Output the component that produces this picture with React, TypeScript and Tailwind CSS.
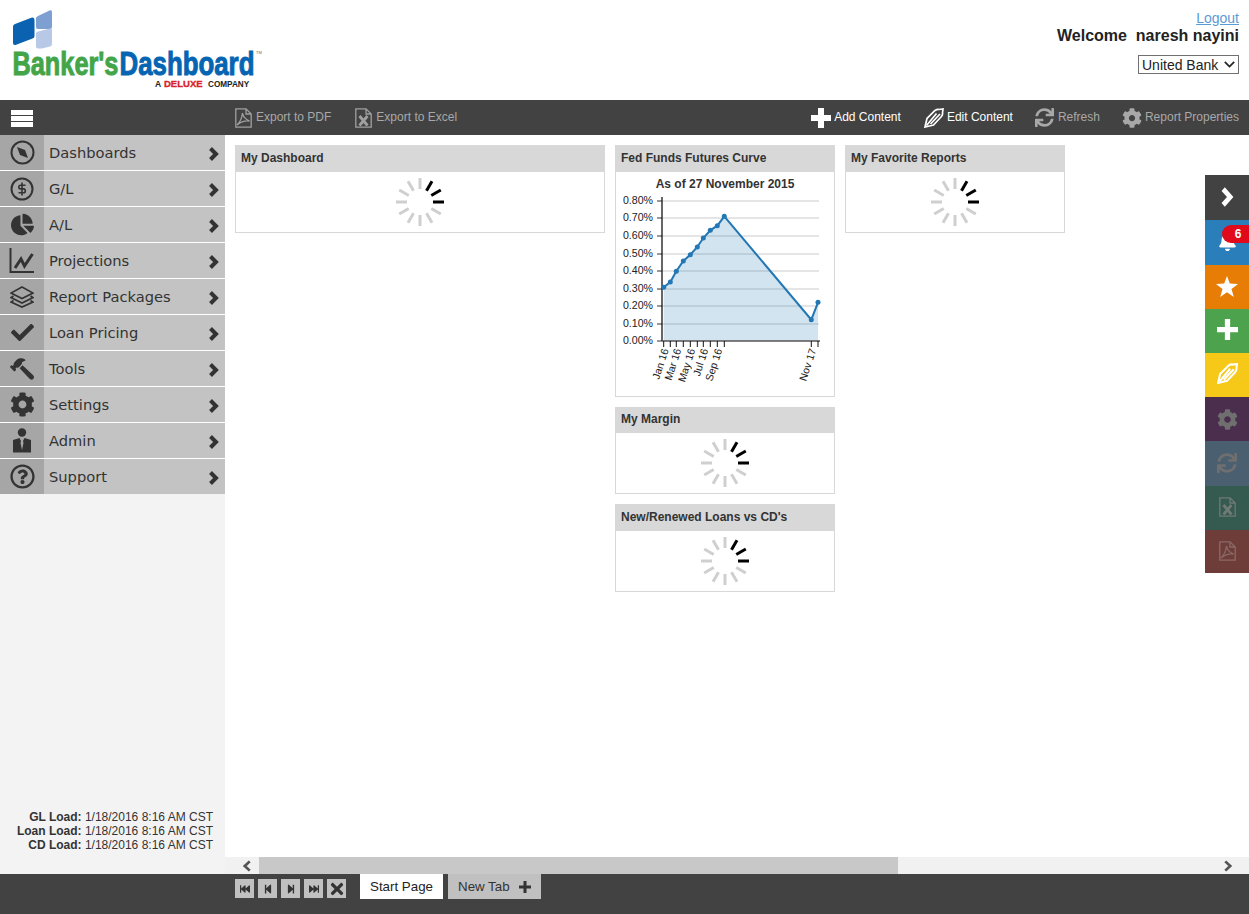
import React from "react";
import { FaChartPie, FaCheck, FaHammer, FaCog, FaRegQuestionCircle, FaSync, FaBell, FaTimes, FaStepBackward, FaStepForward, FaFastBackward, FaFastForward } from "react-icons/fa";

const Chevron = ({ w = 11, h = 14, color = "#333", dir = "right", sw = 4 }: { w?: number; h?: number; color?: string; dir?: string; sw?: number }) => (
  <svg width={w} height={h} viewBox="0 0 11 14" preserveAspectRatio="none" className={dir === "left" ? "-scale-x-100" : ""}>
    <path d="M2.5 1.5 L8 7 L2.5 12.5" fill="none" stroke={color} strokeWidth={sw} />
  </svg>
);
const Compass = () => (
  <svg width="25" height="25" viewBox="0 0 25 25">
    <circle cx="12.5" cy="12.5" r="11" fill="none" stroke="#333" strokeWidth="2" />
    <path d="M7 7 L15 10 L18 18 L10 15 Z" fill="#333" />
  </svg>
);
const Dollar = () => (
  <svg width="24" height="24" viewBox="0 0 24 24">
    <circle cx="12" cy="12" r="10.5" fill="none" stroke="#333" strokeWidth="2" />
    <path d="M15.5 8.2 H10.5 Q8.8 8.2 8.8 10 Q8.8 11.9 10.5 11.9 H13.5 Q15.3 11.9 15.3 13.9 Q15.3 15.8 13.5 15.8 H8.5 M12 5.5 V18.5" fill="none" stroke="#333" strokeWidth="1.6" />
  </svg>
);
const ChartIcon = () => (
  <svg width="26" height="26" viewBox="0 0 26 26">
    <path d="M1.5 0 V24 H25" fill="none" stroke="#333" strokeWidth="2" />
    <path d="M6 20 L12 11 L15.5 18 L23.5 6" fill="none" stroke="#333" strokeWidth="3" />
  </svg>
);
const LayersIcon = () => (
  <svg width="24" height="22" viewBox="0 0 24 22" fill="none" stroke="#333" strokeWidth="1.6">
    <path d="M12 1 L23 7 L12 12.5 L1 7 Z" />
    <path d="M3.5 10 L1 11.5 L12 17 L23 11.5 L20.5 10" />
    <path d="M3.5 14.5 L1 16 L12 21 L23 16 L20.5 14.5" />
  </svg>
);
const AdminIcon = () => (
  <svg width="20" height="25" viewBox="0 0 20 25" fill="#333">
    <circle cx="10" cy="4.5" r="4.2" />
    <path d="M1 12 L7.5 10 L9 13 L8.5 15 L10 22 L11.5 15 L11 13 L12.5 10 L19 12 V24.5 H1 Z" />
  </svg>
);
const Pen = ({ size = 20, color = "#fff", sw = 1.7 }: { size?: number; color?: string; sw?: number }) => (
  <svg width={size} height={size} viewBox="0 0 20 20" fill="none" stroke={color} strokeWidth={sw}>
    <path d="M1 19 L3 10.5 L11 2.5 Q13.5 0.8 15 1.5 L19 1 L18.5 5 Q19 7 17 9 L9.5 17 Z" />
    <path d="M2.5 17.5 L12.5 5.5 M6.5 16 L16 6" />
  </svg>
);
const Pdf = ({ color = "#a0a0a0", size = 20 }: { color?: string; size?: number }) => (
  <svg width={size * 0.85} height={size} viewBox="0 0 17 20" fill="none" stroke={color} strokeWidth="1.3">
    <path d="M0.8 0.8 H11 L16.2 6 V19.2 H0.8 Z M11 0.8 V6 H16.2" />
    <path d="M2 17 Q6.5 13 7.5 5 Q8 10 14.5 13 Q8 12 2 17 Z" />
  </svg>
);
const Xls = ({ color = "#a0a0a0", size = 20 }: { color?: string; size?: number }) => (
  <svg width={size * 0.85} height={size} viewBox="0 0 17 20" fill="none" stroke={color} strokeWidth="1.3">
    <path d="M0.8 0.8 H11 L16.2 6 V19.2 H0.8 Z M11 0.8 V6 H16.2" />
    <path d="M4.5 8 L12.5 17.5 M12.5 8 L4.5 17.5" strokeWidth="2.8" />
  </svg>
);
const BigPlus = ({ size = 20, t = 6 }: { size?: number; t?: number }) => {
  const a = (20 - t) / 2;
  const b = a + t;
  return (
    <svg width={size} height={size} viewBox="0 0 20 20" fill="currentColor" className="text-white">
      <path d={`M${a} 0 H${b} V${a} H20 V${b} H${b} V20 H${a} V${b} H0 V${a} H${a} Z`} />
    </svg>
  );
};
const Star = () => (
  <svg width="22" height="21" viewBox="0 0 22 21" fill="#fff">
    <path d="M11 0 L13.8 7.6 L22 7.9 L15.5 12.9 L17.8 21 L11 16.3 L4.2 21 L6.5 12.9 L0 7.9 L8.2 7.6 Z" />
  </svg>
);

const Spinner = () => {
  const ticks = [0, 30, 60, 90, 120, 150, 180, 210, 240, 270, 300, 330];
  return (
    <svg width="50" height="50" viewBox="-25 -25 50 50">
      {ticks.map((a) => (
        <line key={a} x1="0" y1="-13" x2="0" y2="-24" strokeWidth="3" stroke={a === 30 || a === 60 || a === 90 ? "#000" : "#cfcfcf"} transform={`rotate(${a})`} />
      ))}
    </svg>
  );
};

const Card = ({ title, children, bodyClass, headClass }: { title: string; children?: React.ReactNode; bodyClass?: string; headClass?: string }) => (
  <div className="border border-[#d8d8d8] bg-white">
    <div className={`bg-[#d8d8d8] pl-[5px] text-[12px] leading-[15px] font-bold text-[#333] ${headClass ?? "h-[26px] pt-[5px]"}`}>{title}</div>
    <div className={bodyClass ?? "flex h-[60px] items-center justify-center"}>{children ?? <Spinner />}</div>
  </div>
);

const Logo = () => (
  <svg width="270" height="100" viewBox="0 0 270 100" className="block font-['Liberation_Sans']">
    <path d="M15 24 L32 17.5 Q34.5 17 34.5 20 V36 Q34.5 38 32.5 38.5 L15.5 45 Q13 45.5 13 43 V26.5 Q13 24.8 15 24 Z" fill="#0a62b0" />
    <path d="M38 16 L50 10.3 Q52 9.8 52 12 V27 Q52 29 50 29 H38 Q36 29 36 27 V18 Q36 17 38 16 Z" fill="#7d9fd1" />
    <path d="M38 31.5 L50 28.5 Q52 28.3 52 30 V44 Q52 46 50 46.5 L42 48.5 H38 Q36 48.5 36 46 V33 Q36 32 38 31.5 Z" fill="#b7c9e6" />
    <g transform="translate(12.5 74.5) scale(0.745 1)">
      <text fontWeight="700" fontSize="34" fill="#43a548" stroke="#43a548" strokeWidth="1">Banker's</text>
    </g>
    <g transform="translate(119.5 74.5) scale(0.76 1)">
      <text fontWeight="700" fontSize="34" fill="#0565b3" stroke="#0565b3" strokeWidth="1">Dashboard</text>
    </g>
    <text x="155" y="86.5" fontWeight="700" fontSize="8.5" fill="#222">A</text>
    <g transform="translate(164 86.5) scale(1.12 1)">
      <text fontWeight="700" fontSize="8.5" fill="#d8232a" stroke="#d8232a" strokeWidth="0.3">DELUXE</text>
    </g>
    <text x="208" y="86.5" fontWeight="700" fontSize="8.2" fill="#222">COMPANY</text>
    <text x="256" y="54" fontSize="4" fill="#666">TM</text>
  </svg>
);

const menu: [string, React.ReactNode][] = [
  ["Dashboards", <Compass />],
  ["G/L", <Dollar />],
  ["A/L", <FaChartPie size={23} />],
  ["Projections", <ChartIcon />],
  ["Report Packages", <LayersIcon />],
  ["Loan Pricing", <FaCheck size={23} />],
  ["Tools", <FaHammer size={24} className="-scale-x-100" />],
  ["Settings", <FaCog size={25} />],
  ["Admin", <AdminIcon />],
  ["Support", <FaRegQuestionCircle size={25} />],
];

const ToolItem = ({ icon, label, active, iconW = "w-[20px]", gap = "gap-[3px]", extra = "" }: { icon: React.ReactNode; label: string; active?: boolean; iconW?: string; gap?: string; extra?: string }) => (
  <div className={`flex items-center text-[12px] ${gap} ${extra} ${active ? "text-white" : "text-[#a8a8a8]"}`}>
    <span className={`flex items-center justify-center ${iconW}`}>{icon}</span>
    <span className="mb-[2px]">{label}</span>
  </div>
);

const pts: [number, number][] = [[663.7,287.3],[670.3,282],[676.3,271.3],[683.3,261],[690.3,254.7],[697.3,247],[703.3,238],[710.3,230.3],[717.3,225.7],[724.3,216.3],[811.3,319.7],[818,302.3]];
const labels: [string, number][] = [["0.80%",201],["0.70%",218],["0.60%",236],["0.50%",254],["0.40%",271],["0.30%",289],["0.20%",306],["0.10%",324],["0.00%",341]];
const xLabels: [string, number][] = [["Jan 16",663.7],["Mar 16",676.3],["May 16",690.3],["Jul 16",703.3],["Sep 16",717.3],["Nov 17",811.3]];

const Chart = () => (
  <svg width="218" height="224" viewBox="616 172 218 224" className="block font-['Liberation_Sans']">
    <text x="725" y="188" textAnchor="middle" fontSize="12" fontWeight="700" fill="#333">As of 27 November 2015</text>
    {labels.map(([t, y]) => (
      <g key={t}>
        <line x1="657" x2="662" y1={y} y2={y} stroke="#333" />
        {t !== "0.00%" && <line x1="662" x2="819" y1={y} y2={y} stroke="#ddd" strokeWidth="1.5" />}
        <text x="653" y={y + 3} textAnchor="end" fontSize="10.6" fill="#222">{t}</text>
      </g>
    ))}
    <path d={`M${pts[0][0]} 341 ${pts.map((p) => `L${p[0]} ${p[1]}`).join(" ")} L818 341 Z`} fill="#1f77b4" fillOpacity="0.2" />
    <line x1="662" x2="662" y1="197" y2="341" stroke="#000" strokeWidth="1.2" />
    <line x1="662" x2="820" y1="341" y2="341" stroke="#555" strokeWidth="1.5" />
    {pts.map((p) => (
      <line key={p[0]} x1={p[0]} x2={p[0]} y1="341" y2="347" stroke="#111" />
    ))}
    <polyline points={pts.map((p) => p.join(",")).join(" ")} fill="none" stroke="#2277b4" strokeWidth="2" />
    {pts.map((p) => (
      <circle key={p[0]} cx={p[0]} cy={p[1]} r="2.5" fill="#2277b4" />
    ))}
    {xLabels.map(([t, x]) => (
      <text key={t} x={x + 5} y="350" textAnchor="end" fontSize="10.5" fill="#222" transform={`rotate(-72 ${x + 5} 350)`}>{t}</text>
    ))}
  </svg>
);

const rail: [string, React.ReactNode, string, string][] = [
  ["bg-[#424242]", <Chevron w={14} h={20} color="#fff" sw={3.6} />, "h-[45px]", "mb-[2px]"],
  ["bg-[#2a7fba]", <FaBell size={19} color="#fff" />, "h-[45px]", "mb-[2px]"],
  ["bg-[#e87d05]", <Star />, "h-[44px]", "mb-[2px]"],
  ["bg-[#4da34d]", <BigPlus size={21} t={5} />, "h-[44px]", "mb-[3px]"],
  ["bg-[#f6c817]", <Pen size={21} sw={2} />, "h-[44px]", "mb-[4px]"],
  ["bg-[#4b2d4d]", <FaCog size={21} color="#6f6f6f" />, "h-[44px]", "mb-0"],
  ["bg-[#4a5f70]", <FaSync size={20} color="#6f6f6f" />, "h-[45px]", "mb-[2px]"],
  ["bg-[#355a50]", <Xls color="#6f7a75" />, "h-[44px]", "mb-[2px]"],
  ["bg-[#6e3d39]", <Pdf color="#8a6a66" />, "h-[43px]", "mb-[2px]"],
];

const NavBtn = ({ children }: { children: React.ReactNode }) => (
  <div className="flex h-[19px] w-[19px] items-center justify-center bg-[#c0c0c0] text-[#333]">{children}</div>
);

export default function App() {
  return (
    <div className="relative flex h-[914px] w-[1249px] flex-col overflow-hidden bg-white font-['Liberation_Sans',Arial,sans-serif]">
      <header className="flex h-[100px] shrink-0 justify-between">
        <Logo />
        <div className="flex flex-col items-end pr-[10px] pt-[10px] text-[#222]">
          <a className="text-[14px] leading-[16px] text-[#5b9bd5] underline">Logout</a>
          <div className="mt-[1px] text-[16px] leading-[18px] font-bold whitespace-pre">Welcome  naresh nayini</div>
          <div className="relative mt-[10px]">
            <select className="block h-[19px] w-[101px] appearance-none rounded-none border border-[#707070] bg-white pl-[3px] text-[14px] leading-[16px] text-[#222]">
              <option>United Bank</option>
            </select>
            <svg width="11" height="7" viewBox="0 0 11 7" className="pointer-events-none absolute right-[4px] top-[6px]">
              <path d="M0.8 0.8 L5.5 5.5 L10.2 0.8" fill="none" stroke="#222" strokeWidth="1.7" />
            </svg>
          </div>
        </div>
      </header>

      <div className="flex h-[35px] shrink-0 items-center bg-[#424242]">
        <div className="flex w-[235px] shrink-0 pl-[11px]">
          <div className="mt-[2px] flex w-[22px] flex-col gap-[1px]">
            <div className="h-[5px] bg-white" />
            <div className="h-[5px] bg-white" />
            <div className="h-[5px] bg-white" />
          </div>
        </div>
        <div className="flex flex-1 items-center justify-between pr-[10px]">
          <div className="flex gap-[24px]">
            <ToolItem icon={<Pdf />} label="Export to PDF" iconW="w-[17px]" gap="gap-[4px]" />
            <ToolItem icon={<Xls />} label="Export to Excel" iconW="w-[17px]" gap="gap-[4px]" />
          </div>
          <div className="flex">
            <ToolItem icon={<BigPlus />} label="Add Content" active />
            <ToolItem icon={<Pen />} label="Edit Content" active extra="ml-[23px]" />
            <ToolItem icon={<FaSync size={19} color="#a8a8a8" />} label="Refresh" extra="ml-[22px]" />
            <ToolItem icon={<FaCog size={20} color="#a8a8a8" />} label="Report Properties" extra="ml-[22px]" />
          </div>
        </div>
      </div>

      <div className="flex min-h-0 flex-1">
        <aside className="flex w-[225px] shrink-0 flex-col justify-between bg-[#f3f3f3] pb-[22px]">
          <nav className="flex flex-col gap-px bg-white">
            {menu.map(([label, icon]) => (
              <div key={label} className="flex h-[35px] text-[#333]">
                <div className="flex w-[44px] items-center justify-center bg-[#a6a6a6]">{icon}</div>
                <div className="flex flex-1 items-center justify-between bg-[#c3c3c3] pl-[5px] pr-[6px] font-['DejaVu_Sans'] text-[14.67px]">
                  <span>{label}</span>
                  <span className="mt-[3px] flex"><Chevron /></span>
                </div>
              </div>
            ))}
          </nav>
          <div className="pr-[12px] text-right text-[12px] leading-[14px] text-[#333]">
            <div><b>GL Load:</b> 1/18/2016 8:16 AM CST</div>
            <div><b>Loan Load:</b> 1/18/2016 8:16 AM CST</div>
            <div><b>CD Load:</b> 1/18/2016 8:16 AM CST</div>
          </div>
        </aside>

        <main className="flex min-w-0 flex-1 flex-col">
          <div className="flex flex-1 gap-[10px] pl-[10px] pt-[10px]">
            <div className="w-[370px]">
              <Card title="My Dashboard" />
            </div>
            <div className="flex w-[220px] flex-col gap-[10px]">
              <Card title="Fed Funds Futures Curve" bodyClass="h-[224px]">
                <Chart />
              </Card>
              <Card title="My Margin" headClass="h-[25px] pt-[4px]" />
              <Card title="New/Renewed Loans vs CD's" />
            </div>
            <div className="w-[220px]">
              <Card title="My Favorite Reports" />
            </div>
          </div>
          <div className="flex h-[17px] shrink-0 items-center bg-[#f1f1f1]">
            <div className="flex w-[34px] justify-center pl-[10px]"><Chevron w={10} h={12} color="#555" dir="left" sw={3} /></div>
            <div className="h-full w-[639px] bg-[#c8c8c8]" />
            <div className="flex-1" />
            <div className="flex w-[34px] justify-center pr-[8px]"><Chevron w={10} h={12} color="#555" sw={3} /></div>
          </div>
        </main>
      </div>

      <footer className="flex h-[40px] shrink-0 items-start bg-[#424242] pl-[235px]">
        <div className="mt-[5px] flex gap-[4px]">
          <NavBtn><FaFastBackward size={10} /></NavBtn>
          <NavBtn><FaStepBackward size={10} /></NavBtn>
          <NavBtn><FaStepForward size={10} /></NavBtn>
          <NavBtn><FaFastForward size={10} /></NavBtn>
          <NavBtn><FaTimes size={18} /></NavBtn>
        </div>
        <div className="ml-[14px] flex h-[25px] w-[83px] items-center justify-center bg-white text-[13.33px] text-[#222]">Start Page</div>
        <div className="ml-[5px] flex h-[25px] w-[93px] items-center gap-[9px] bg-[#c0c0c0] pl-[10px] text-[13.33px] text-[#333]">
          New Tab
          <svg width="12" height="12" viewBox="0 0 12 12" fill="#333"><path d="M4.5 0 H7.5 V4.5 H12 V7.5 H7.5 V12 H4.5 V7.5 H0 V4.5 H4.5 Z" /></svg>
        </div>
      </footer>

      <div className="absolute right-0 top-[175px] flex w-[44px] flex-col">
        {rail.map(([bg, icon, h, shift], i) => (
          <div key={i} className={`flex items-center justify-center ${bg} ${h}`}>
            <span className={`flex ${shift}`}>{icon}</span>
          </div>
        ))}
        <div className="absolute right-0 top-[50px] flex h-[18px] w-[27px] items-center justify-center rounded-l-[9px] bg-[#e00a1b] pl-[5px] text-[12px] font-bold text-white">6</div>
      </div>
    </div>
  );
}
